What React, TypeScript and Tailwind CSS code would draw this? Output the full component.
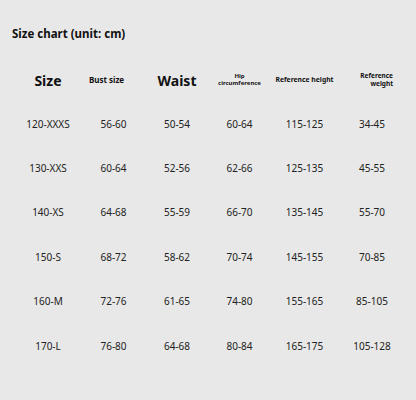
const rows = [
  ["120-XXXS", "56-60", "50-54", "60-64", "115-125", "34-45"],
  ["130-XXS", "60-64", "52-56", "62-66", "125-135", "45-55"],
  ["140-XS", "64-68", "55-59", "66-70", "135-145", "55-70"],
  ["150-S", "68-72", "58-62", "70-74", "145-155", "70-85"],
  ["160-M", "72-76", "61-65", "74-80", "155-165", "85-105"],
  ["170-L", "76-80", "64-68", "80-84", "165-175", "105-128"],
];

const App = () => {
  return (
    <div
      className="w-[416px] h-[400px] bg-[#e8e8e8] text-[#111] overflow-hidden"
      style={{ fontFamily: '"Noto Sans", "Open Sans", sans-serif' }}
    >
      <h1 className="pl-[12px] pt-[25px] h-[58px] text-[11.5px] font-bold leading-[17px]">
        Size chart (unit: cm)
      </h1>

      <div className="ml-[15px] grid grid-cols-[66px_65px_62px_63px_67px_68px] items-center text-center whitespace-nowrap">
        {/* header */}
        <div className="h-[44px] flex items-center justify-center text-[14px] font-bold">
          Size
        </div>
        <div className="h-[44px] flex items-center justify-center pr-[14px] text-[8px] font-bold">
          Bust size
        </div>
        <div className="h-[44px] flex items-center justify-center text-[14px] font-bold">
          Waist
        </div>
        <div className="h-[44px] flex flex-col items-center justify-center text-[6px] font-bold leading-[7px]">
          <span>Hip</span>
          <span>circumference</span>
        </div>
        <div className="h-[44px] flex items-center justify-center text-[6.8px] font-bold">
          Reference height
        </div>
        <div className="h-[44px] flex flex-col items-end justify-center pr-[13px] text-[6.5px] font-bold leading-[8px] text-right">
          <span>Reference</span>
          <span>weight</span>
        </div>

        {rows.map((r) =>
          r.map((c, i) => (
            <div
              key={r[0] + i}
              className="h-[44.4px] flex items-center justify-center text-[10px] text-[#222]"
            >
              {c}
            </div>
          ))
        )}
      </div>
    </div>
  );
};

export default App;
